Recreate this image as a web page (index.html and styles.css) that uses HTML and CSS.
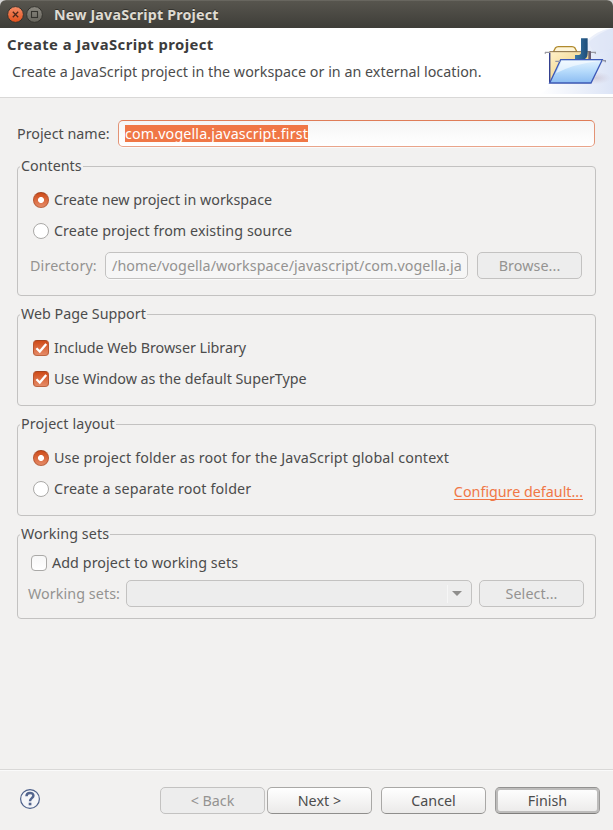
FILE: index.html
```
<!DOCTYPE html>
<html lang="en">
<head>
<meta charset="utf-8">
<title>New JavaScript Project</title>
<link rel="stylesheet" href="styles.css">
</head>
<body>
<div class="window">
  <header class="titlebar">
    <svg class="winbuttons" width="40" height="20" viewBox="0 0 40 20">
      <defs>
        <linearGradient id="close" x1="0" y1="0" x2="0" y2="1"><stop offset="0" stop-color="#f58d68"/><stop offset="1" stop-color="#e2501b"/></linearGradient>
        <linearGradient id="max" x1="0" y1="0" x2="0" y2="1"><stop offset="0" stop-color="#8b8981"/><stop offset="1" stop-color="#66645c"/></linearGradient>
      </defs>
      <circle cx="10.5" cy="9.5" r="7.9" fill="url(#close)" stroke="#34332e"/>
      <path d="M7.8 6.8l5.4 5.4M13.2 6.8l-5.4 5.4" stroke="#4b271a" stroke-width="1.3"/>
      <circle cx="29.5" cy="9.5" r="7.9" fill="url(#max)" stroke="#34332e"/>
      <rect x="26.5" y="6.5" width="6" height="6" fill="none" stroke="#34332e" stroke-width="1.1"/>
    </svg>
    <span class="caption">New JavaScript Project</span>
  </header>

  <section class="banner">
    <div class="banner-text">
      <h1>Create a JavaScript project</h1>
      <p class="tight">Create a JavaScript project in the workspace or in an external location.</p>
    </div>
    <svg class="banner-art" width="73" height="66" viewBox="120 24 219 198">
      <defs>
        <linearGradient id="haze" x1="0" y1="0" x2="1" y2="0"><stop offset="0" stop-color="#fff"/><stop offset="1" stop-color="#dce4f6"/></linearGradient>
        <linearGradient id="back" x1="0" y1="0" x2="1" y2="1"><stop offset="0" stop-color="#fff1c9"/><stop offset="1" stop-color="#e9c46a"/></linearGradient>
        <linearGradient id="front" x1="0" y1="0" x2="0" y2="1"><stop offset="0" stop-color="#e4f3ff"/><stop offset=".5" stop-color="#b5dafb"/><stop offset="1" stop-color="#8bbcf2"/></linearGradient>
        <linearGradient id="jay" x1="0" y1="0" x2="1" y2="0"><stop offset="0" stop-color="#3c7aa8"/><stop offset="1" stop-color="#1d4c78"/></linearGradient>
        <radialGradient id="shade"><stop offset="0" stop-color="#b9a9b8" stop-opacity=".45"/><stop offset="1" stop-color="#c8bccb" stop-opacity="0"/></radialGradient>
      </defs>
      <path d="M120 222C190 185 225 60 339 24V222z" fill="url(#haze)"/>
      <path d="M262 60C290 35 315 27 339 24V88C320 90 300 98 286 108z" fill="#dfe6f7" opacity=".6"/>
      <ellipse cx="288" cy="174" rx="45" ry="19" fill="url(#shade)"/>
      <path d="M160 96L166 84Q169 80 175 80H216Q222 80 225 84L231 96z" fill="#fff6da" stroke="#b08a2e" stroke-width="4"/>
      <path d="M149 95H271V188H149z" fill="url(#back)" stroke="#8d7550" stroke-width="3"/>
      <path d="M149 98V188" stroke="#34408f" stroke-width="4"/>
      <path d="M135 97H150M136 101V97M272 97H286V101" fill="none" stroke="#9a9aa2" stroke-width="4"/>
      <path d="M265 94H273V118H265z" fill="#6b5f73"/>
      <path d="M243 55H263V100Q263 119 246 119H225V105H236Q243 105 243 97z" fill="url(#jay)"/>
      <path d="M182 119H307L273 189H149z" fill="url(#front)" stroke="#3d59b8" stroke-width="4"/>
      <path d="M185 123H296Q220 132 168 160z" fill="#fff" opacity=".55"/>
      <path d="M166 124H181M306 122H316V127" fill="none" stroke="#9295a6" stroke-width="4"/>
    </svg>
  </section>

  <main class="page">
    <div class="name-row">
      <label class="tight">Project name:</label>
      <div class="entry focused"><span class="selection">com.vogella.javascript.first</span></div>
    </div>

    <fieldset class="contents">
      <legend class="tight">Contents</legend>
      <div class="option"><i class="radio on"></i><span class="tight">Create new project in workspace</span></div>
      <div class="option"><i class="radio"></i><span>Create project from existing source</span></div>
      <div class="directory-row">
        <label class="medium">Directory:</label>
        <div class="entry disabled"><span class="clip">/home/vogella/workspace/javascript/com.vogella.ja</span></div>
        <div class="button disabled">Browse...</div>
      </div>
    </fieldset>

    <fieldset class="support">
      <legend class="tight">Web Page Support</legend>
      <div class="option"><i class="check on"><svg width="16" height="16"><path d="M3.4 8.2L6.8 11.6L13.2 4" /></svg></i><span class="snug">Include Web Browser Library</span></div>
      <div class="option"><i class="check on"><svg width="16" height="16"><path d="M3.4 8.2L6.8 11.6L13.2 4" /></svg></i><span class="snug">Use Window as the default SuperType</span></div>
    </fieldset>

    <fieldset class="layout">
      <legend class="medium">Project layout</legend>
      <div class="option"><i class="radio on"></i><span class="medium">Use project folder as root for the JavaScript global context</span></div>
      <div class="option"><i class="radio"></i><span class="medium">Create a separate root folder</span><a class="tight">Configure default...</a></div>
    </fieldset>

    <fieldset class="sets">
      <legend>Working sets</legend>
      <div class="option"><i class="check"></i><span>Add project to working sets</span></div>
      <div class="sets-row">
        <label>Working sets:</label>
        <div class="combo"><i class="arrow"></i></div>
        <div class="button disabled">Select...</div>
      </div>
    </fieldset>
  </main>

  <footer class="actions">
    <svg class="help" width="22" height="22" viewBox="0 0 22 22">
      <circle cx="11" cy="11" r="9.4" fill="#f5f6f9" stroke="#4d608a" stroke-width="1.2"/>
      <path d="M7.5 8.3C7.4 3.9 14.5 3.9 14.4 7.8C14.3 10.2 11 10.2 11 13.2" fill="none" stroke="#53658e" stroke-width="2.5"/>
      <rect x="9.7" y="14.7" width="2.7" height="2.6" fill="#53658e"/>
    </svg>
    <div class="button disabled tight">&lt; Back</div>
    <div class="button next">Next &gt;</div>
    <div class="button cancel tight">Cancel</div>
    <div class="button default tight">Finish</div>
  </footer>
</div>
</body>
</html>
```
FILE: styles.css
```
* { box-sizing: border-box; }
body {
  margin: 0;
  background: #d5d5d5;
  color: #4c4c4c;
  font: 14.3px/18px "Noto Sans", sans-serif;
  letter-spacing: 0.08px;
  white-space: nowrap;
}
.snug { letter-spacing: -0.04px; }
.tight { letter-spacing: 0; }
.medium { letter-spacing: 0.13px; }

.window {
  display: flex;
  flex-direction: column;
  width: 613px;
  height: 830px;
  background: #f2f1f0;
  border-radius: 6px 6px 0 0;
  overflow: hidden;
}
.titlebar {
  display: flex;
  align-items: center;
  height: 28px;
  padding-left: 5px;
  background: linear-gradient(#57554e, #3e3d38);
  border-top: 1px solid #68665f;
}
.winbuttons { margin-top: 1px; }
.caption {
  margin-left: 9px;
  padding-top: 1px;
  color: #dfdbd2;
  font-weight: bold;
  letter-spacing: 0.16px;
  text-shadow: 0 -1px 0 #33322d;
}

.banner {
  display: flex;
  justify-content: space-between;
  height: 70px;
  background: #fff;
  border-bottom: 1px solid #d9d8d7;
}
.banner-text { padding: 7px 0 0 7px; }
h1 {
  margin: 0;
  color: #3c3c3c;
  font-size: 14.8px;
  line-height: 18px;
  letter-spacing: 0.43px;
}
p { margin: 10px 0 0 5px; }
p.tight { letter-spacing: 0.02px; }
.banner-art { flex: none; }

.page { flex: 1; padding: 22px 17px 0; }
.name-row { display: flex; align-items: center; width: 578px; }
.name-row label { width: 101px; }
.entry {
  flex: 1;
  min-width: 0;
  height: 27px;
  padding: 4px 6px;
  border: 1px solid #c3c2c1;
  border-radius: 5px;
  background: #f6f6f6;
  box-shadow: 0 1px 0 #fafafa;
}
.entry.focused {
  border-color: #df7d58 #e39375 #e9a48a;
  background: linear-gradient(#f5f5f5, #fff);
}
.selection {
  display: inline-block;
  height: 17px;
  line-height: 17px;
  background: #f07746;
  color: #fff;
  letter-spacing: 0.13px;
}
.clip { display: block; letter-spacing: 0.07px; }
.entry.disabled, .directory-row, .sets-row { color: #949391; }

fieldset {
  width: 579px;
  min-width: 0;
  margin: 0 0 9px;
  padding: 10px 12px 0 15px;
  border: 1px solid #c3c2c1;
  border-radius: 4px;
}
legend { height: 18px; margin-left: -13px; padding: 0 1px; }
.contents { height: 139px; margin-top: 10px; }
.support, .layout { height: 101px; }
.sets { height: 94px; padding: 5px 11px 0 10px; }
.sets legend { margin-left: -8px; }

.option { display: flex; align-items: center; height: 30px; margin-bottom: 1px; }
.option span { margin-left: 5px; }
.option a {
  margin: 6px 0 0 auto;
  color: #f07746;
  text-decoration: underline;
  text-underline-offset: 2px;
  text-decoration-skip-ink: none;
}
.radio, .check {
  flex: none;
  width: 16px;
  height: 16px;
  border: 1px solid #aaa9a7;
  background: linear-gradient(#f7f7f7, #fff);
}
.radio { border-radius: 50%; background: #fff; }
.radio.on {
  border-color: #a4441f #b9552e #bd6541;
  background: radial-gradient(circle, #fff 2.6px, transparent 3.4px), linear-gradient(#cf4b18, #e58a66);
}
.check { border-radius: 4px; }
.check.on {
  border-color: #a4441f #b9552e #bd6541;
  background: linear-gradient(#cf4b18, #e58a66);
}
.check svg { display: block; margin: -1px; }
.check path { fill: none; stroke: #fff; stroke-width: 2.3; }

.directory-row { display: flex; align-items: center; margin: 6px 1px 0 -3px; }
.directory-row label { width: 75px; }
.directory-row .button { margin-left: 9px; }
.sets .option { margin-left: 3px; margin-bottom: 2px; }
.sets-row { display: flex; align-items: center; }
.sets-row label { width: 98px; }
.sets-row .button { margin-left: 7px; }
.combo {
  display: flex;
  align-items: center;
  justify-content: flex-end;
  flex: 1;
  height: 27px;
  padding-right: 9px;
  border: 1px solid #c3c2c1;
  border-radius: 5px;
  background: #ededed;
}
.arrow {
  border: 5px solid transparent;
  border-top: 5px solid #8f8e8c;
  border-bottom: 0;
}
.combo::before {
  content: "";
  width: 1px;
  height: 18px;
  margin-right: 4px;
  background: #f6f6f6;
}

.button {
  flex: none;
  width: 105px;
  height: 27px;
  border: 1px solid #a9a8a6;
  border-bottom-color: #8f8e8c;
  border-radius: 5px;
  background: linear-gradient(#fff, #ebeae9);
  line-height: 26px;
  text-align: center;
}
.button.disabled {
  border-color: #c3c2c1;
  background: #ededed;
  color: #949391;
}
.button.default {
  border-color: #929190 #9a9998 #7f7e7c;
  box-shadow: inset 0 0 0 2px #bdbcbb;
}

.actions {
  display: flex;
  align-items: flex-start;
  height: 61px;
  padding: 17px 13px 0 19px;
  border-top: 1px solid #d9d8d7;
  box-shadow: inset 0 1px 0 #fafafa;
}
.help { margin: 1px auto 0 0; }
.next { margin-left: 2px; }
.cancel, .default { margin-left: 9px; }
```
